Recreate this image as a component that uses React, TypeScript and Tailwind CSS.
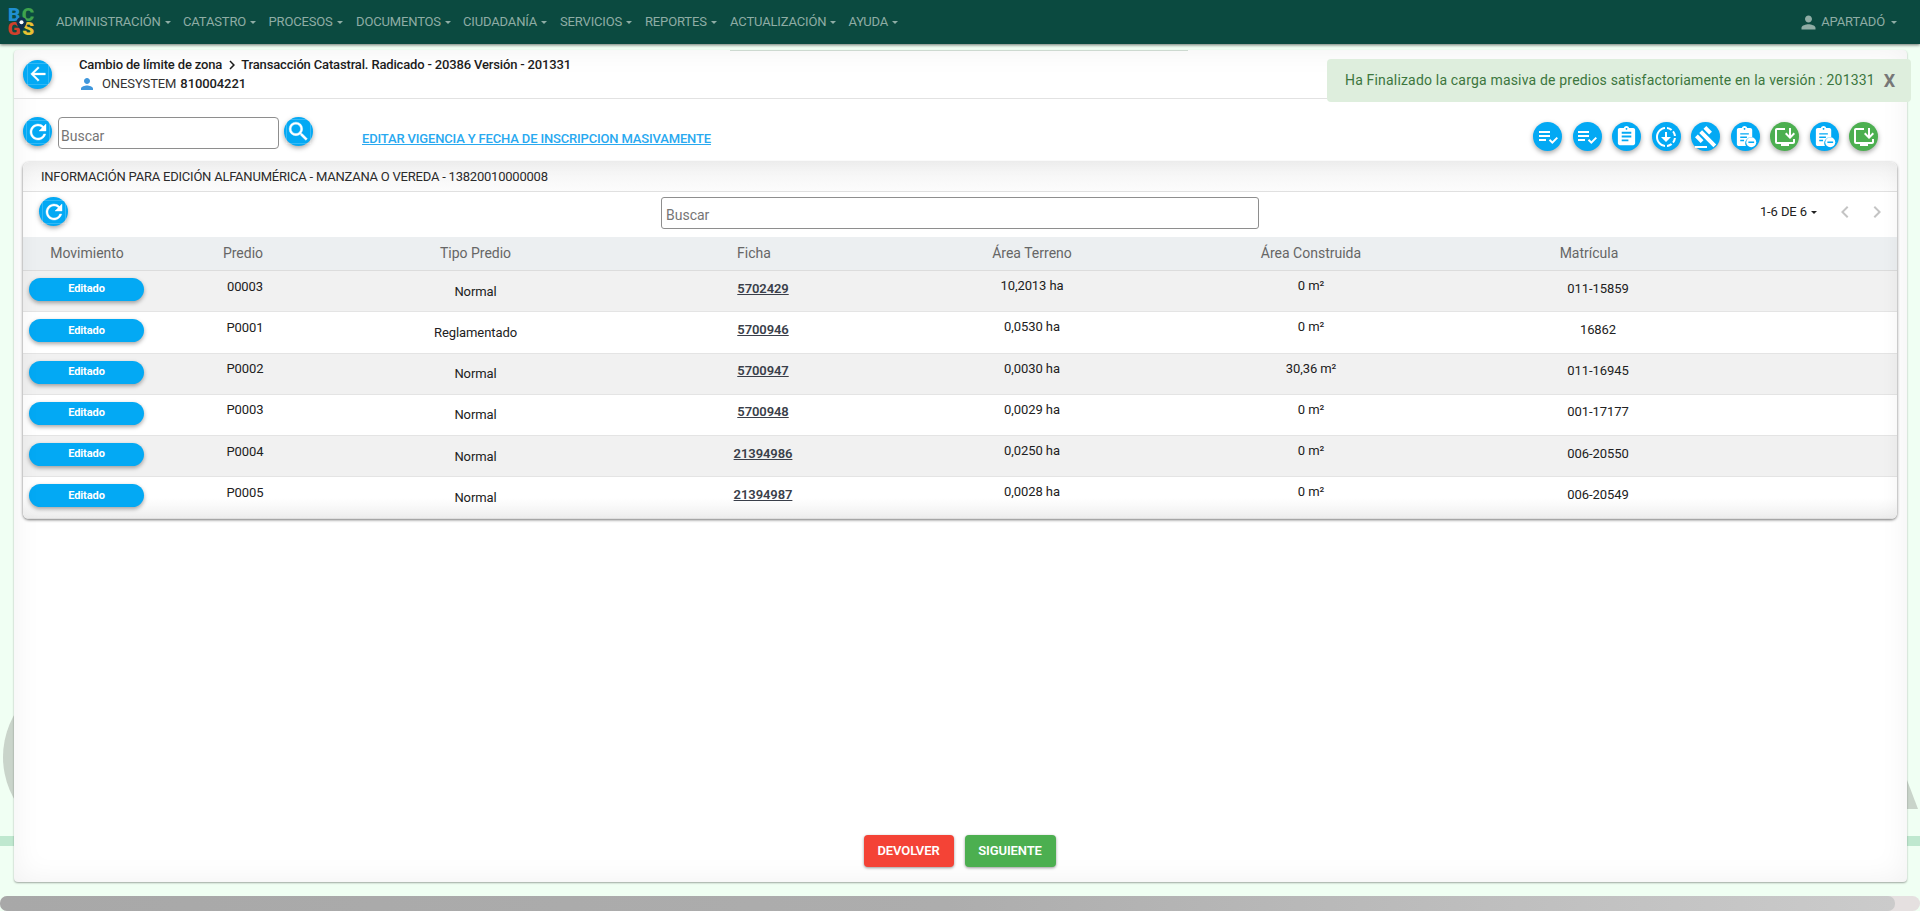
import React from "react";
import {
  MdArrowBack,
  MdAssignment,
  MdChevronLeft,
  MdChevronRight,
  MdDownloading,
  MdGavel,
  MdInstallDesktop,
  MdPerson,
  MdPlaylistAddCheck,
  MdRefresh,
  MdSearch,
} from "react-icons/md";

const NAV: [string, string][] = [
  ["ADMINISTRACIÓN", "w-[127px]"],
  ["CATASTRO", "w-[85.5px]"],
  ["PROCESOS", "w-[87.5px]"],
  ["DOCUMENTOS", "w-[107px]"],
  ["CIUDADANÍA", "w-[97px]"],
  ["SERVICIOS", "w-[85px]"],
  ["REPORTES", "w-[85px]"],
  ["ACTUALIZACIÓN", "w-[118.5px]"],
  ["AYUDA", "w-[60px]"],
];

const ROWS = [
  ["00003", "Normal", "5702429", "10,2013 ha", "0 m²", "011-15859"],
  ["P0001", "Reglamentado", "5700946", "0,0530 ha", "0 m²", "16862"],
  ["P0002", "Normal", "5700947", "0,0030 ha", "30,36 m²", "011-16945"],
  ["P0003", "Normal", "5700948", "0,0029 ha", "0 m²", "001-17177"],
  ["P0004", "Normal", "21394986", "0,0250 ha", "0 m²", "006-20550"],
  ["P0005", "Normal", "21394987", "0,0028 ha", "0 m²", "006-20549"],
];

const COLS = "grid grid-cols-[128px_184px_281px_276px_280px_278px_278px_1fr]";

function Caret({ className = "" }: { className?: string }) {
  return (
    <span
      className={`inline-block w-0 h-0 border-x-[3.5px] border-x-transparent border-t-[3.5px] border-t-current ${className}`}
    />
  );
}

function Round({
  children,
  green = false,
}: {
  children: React.ReactNode;
  green?: boolean;
}) {
  return (
    <button
      className={`w-[29px] h-[29px] shrink-0 rounded-full flex items-center justify-center text-white shadow-[0_2px_5px_rgba(0,0,0,0.35)] ${
        green ? "bg-[#4caf50]" : "bg-[#03a9f4]"
      }`}
    >
      {children}
    </button>
  );
}

function ClipMinus() {
  return (
    <svg width="23" height="23" viewBox="0 0 24 24" fill="white">
      <path d="M17 3h-3.200C13.400 1.800 12.300 1 11 1S8.600 1.800 8.200 3H5C3.900 3 3 3.900 3 5v15c0 1.100.9 2 2 2h7.500a6.500 6.500 0 0 1 6.500-9.500V5c0-1.100-.9-2-2-2zm-6 0c.55 0 1 .45 1 1s-.45 1-1 1-1-.45-1-1 .45-1 1-1zM6.500 8.500h9V10h-9V8.500zm0 3.500h7v1.500h-7V12zm0 3.500h4V17h-4v-1.500z" />
      <circle cx="18" cy="18" r="5.200" />
      <rect x="15" y="17.200" width="6" height="1.600" fill="#03a9f4" />
    </svg>
  );
}

function Logo() {
  return (
    <div className="relative w-[28px] h-[28px] grid grid-cols-2 grid-rows-2 text-[19px] leading-[14px] font-black text-center font-['Roboto',sans-serif]">
      <span className="text-[#1f8fd0]">B</span>
      <span className="text-[#3fa34d]">C</span>
      <span className="text-[#d0402c]">G</span>
      <span className="text-[#e8c232]">S</span>
      <svg
        className="absolute left-[9px] top-[9px]"
        width="11"
        height="14"
        viewBox="0 0 12 15"
      >
        <path d="M6 0a5.500 5.500 0 0 1 5.500 5.500C11.500 9 6 15 6 15S.5 9 .5 5.500A5.500 5.500 0 0 1 6 0z" fill="#10304f" />
        <circle cx="6" cy="5.500" r="2.200" fill="#fff" />
      </svg>
    </div>
  );
}

export default function App() {
  return (
    <div className="relative h-[911px] w-full overflow-hidden bg-[#f0fff3] flex flex-col font-['Roboto',sans-serif] text-[13px] text-[#212121]">
      {/* watermark behind the card */}
      <div className="absolute left-[3px] top-[672px] w-[170px] h-[170px] rounded-full bg-[#c9d4ca]" />
      <div className="absolute left-0 right-0 top-[836px] h-[10px] bg-[#bfe8cf]" />
      <svg
        className="absolute left-[1880px] top-[780px]"
        width="40"
        height="29"
        viewBox="0 0 40 29"
      >
        <polygon points="27,0 38,29 20,29" fill="#c9d4ca" />
      </svg>

      <nav className="relative z-10 h-[44px] shrink-0 bg-[#0b4a40] shadow-[0_1px_3px_rgba(0,0,0,0.55)] flex items-center pl-[7px] pr-[23px] text-[13px] tracking-[-0.15px] text-[#8fada5]">
        <div className="w-[49px] shrink-0">
          <Logo />
        </div>
        {NAV.map(([label, w]) => (
          <div key={label} className={`${w} shrink-0 flex items-center gap-[4px]`}>
            <span>{label}</span>
            <Caret />
          </div>
        ))}
        <div className="ml-auto flex items-center">
          <MdPerson size={21} className="mr-[2px]" />
          <span>APARTADÓ</span>
          <Caret className="ml-[6px]" />
        </div>
      </nav>

      <main className="relative z-[1] ml-[14px] mr-[13px] mt-[6px] h-[832px] shrink-0 rounded-[4px] bg-white flex flex-col shadow-[inset_0_0_30px_rgba(0,0,0,0.06),0_1px_2px_rgba(0,0,0,0.35)]">
        <header className="h-[49px] shrink-0 border-b border-[#e2e2e2] flex items-center pl-[9px]">
          <Round>
            <MdArrowBack size={22} className="stroke-[0.4]" />
          </Round>
          <div className="ml-[27px] mt-[1px]">
            <div className="h-[19px] flex items-center font-medium text-[#1c1c1c] tracking-[-0.16px]">
              <span>Cambio de límite de zona</span>
              <MdChevronRight size={18} className="mx-[0.5px]" />
              <span>Transacción Catastral. Radicado - 20386 Versión - 201331</span>
            </div>
            <div className="h-[19px] flex items-center tracking-[-0.1px]">
              <MdPerson size={18} className="text-[#3f97dc] ml-[-1px] mr-[6px]" />
              <span className="text-[#333]">ONESYSTEM</span>
              <span className="ml-[4px] font-medium">810004221</span>
            </div>
          </div>
        </header>

        <section className="h-[63px] shrink-0 flex items-start pt-[18px] pl-[9px] pr-[29px]">
          <Round>
            <MdRefresh size={24} className="stroke-[0.4]" />
          </Round>
          <div className="ml-[6px] w-[221px] h-[32px] border border-[#8e8e8e] rounded-[4px] flex items-center pl-[2px] pt-[7px] text-[14px] text-[#757575]">
            Buscar
          </div>
          <div className="ml-[5px]">
            <Round>
              <MdSearch size={25} className="stroke-[0.4]" />
            </Round>
          </div>
          <a className="ml-[49px] mt-[12px] font-medium underline text-[#29a9f0] tracking-[-0.16px]">
            EDITAR VIGENCIA Y FECHA DE INSCRIPCION MASIVAMENTE
          </a>
          <div className="ml-auto mt-[5px] flex gap-[10.500px]">
            <Round><MdPlaylistAddCheck size={24} /></Round>
            <Round><MdPlaylistAddCheck size={24} /></Round>
            <Round><MdAssignment size={23} /></Round>
            <Round><MdDownloading size={24} /></Round>
            <Round><MdGavel size={24} /></Round>
            <Round><ClipMinus /></Round>
            <Round green><MdInstallDesktop size={24} /></Round>
            <Round><ClipMinus /></Round>
            <Round green><MdInstallDesktop size={24} /></Round>
          </div>
        </section>

        <section className="relative ml-[9px] mr-[10px] h-[357px] shrink-0 rounded-[6px] bg-white flex flex-col overflow-hidden shadow-[0_1px_3px_rgba(0,0,0,0.55)]">
          <div className="h-[30px] shrink-0 border-b border-[#e0e0e0] bg-gradient-to-b from-[#f3f3f3] to-[#fcfcfc] flex items-center pl-[18px] text-[#2b2b2b] tracking-[-0.22px]">
            INFORMACIÓN PARA EDICIÓN ALFANUMÉRICA - MANZANA O VEREDA - 13820010000008
          </div>
          <div className="h-[45px] shrink-0 flex items-start pt-[5px] pl-[16px] pr-[8px]">
            <Round>
              <MdRefresh size={24} className="stroke-[0.4]" />
            </Round>
            <div className="ml-[593px] w-[598px] h-[32px] border border-[#8e8e8e] rounded-[3px] flex items-center pl-[4px] pt-[5px] text-[14px] text-[#757575]">
              Buscar
            </div>
            <div className="ml-auto mt-[5px] flex items-center h-[20px] text-[#212121] tracking-[-0.1px]">
              <span>1-6 DE 6</span>
              <Caret className="ml-[4px]" />
              <MdChevronLeft size={24} className="ml-[16px] text-[#c4c4c4]" />
              <MdChevronRight size={24} className="ml-[8px] text-[#c4c4c4]" />
            </div>
          </div>

          <div className={`${COLS} h-[34px] shrink-0 items-center bg-[#eceff1] border-b border-[#dcdcdc] text-[14px] text-[#666] text-center`}>
            <span>Movimiento</span>
            <span>Predio</span>
            <span>Tipo Predio</span>
            <span>Ficha</span>
            <span>Área Terreno</span>
            <span>Área Construida</span>
            <span>Matrícula</span>
          </div>

          {ROWS.map((r, i) => (
            <div
              key={r[0]}
              className={`${COLS} h-[41.300px] shrink-0 text-center border-b border-[#e4e4e4] tracking-[-0.08px] last:border-b-0 ${
                i === 5
                  ? "bg-gradient-to-b from-white via-white to-[#f2f2f2]"
                  : i % 2 === 0
                    ? "bg-[#f1f1f1]"
                    : "bg-white"
              }`}
            >
              <div className="pt-[7px] pl-[6px] text-left">
                <div className="w-[115px] h-[23px] rounded-full bg-[#03a9f4] text-white text-[11px] font-bold flex items-center justify-center shadow-[0_2px_4px_rgba(0,0,0,0.35)]">
                  Editado
                </div>
              </div>
              <div className="pt-[5.500px] pl-[4px]">{r[0]}</div>
              <div className="pt-[10.500px]">{r[1]}</div>
              <div className="pt-[7.500px] pl-[18px] font-semibold text-[#3a3f4a] underline">{r[2]}</div>
              <div className="pt-[5px]">{r[3]}</div>
              <div className="pt-[5px]">{r[4]}</div>
              <div className="pt-[7.500px] pl-[18px]">{r[5]}</div>
              <div />
            </div>
          ))}
          <div className="absolute inset-0 rounded-[6px] pointer-events-none shadow-[inset_0_0_18px_rgba(0,0,0,0.05)]" />
        </section>

        <footer className="mt-auto mb-[15px] pr-[2px] flex justify-center gap-[11px]">
          <button className="w-[90px] h-[32px] rounded-[4px] bg-[#f44336] text-white font-semibold tracking-[-0.1px] shadow-[0_1px_3px_rgba(0,0,0,0.4)]">
            DEVOLVER
          </button>
          <button className="w-[91px] h-[32px] rounded-[4px] bg-[#4caf50] text-white font-semibold tracking-[-0.1px] shadow-[0_1px_3px_rgba(0,0,0,0.4)]">
            SIGUIENTE
          </button>
        </footer>
      </main>

      {/* thin line on the card's upper edge */}
      <div className="absolute z-[2] left-[730px] top-[50px] w-[458px] h-[1px] bg-[#cdd9d0]" />

      {/* success toast */}
      <div className="absolute z-[3] left-[1327px] top-[59px] w-[584px] h-[43px] rounded-[4px] bg-[#deeedd] flex items-center pl-[18px] text-[14px] tracking-[0.18px] text-[#3c763d]">
        <span>Ha Finalizado la carga masiva de predios satisfactoriamente en la versión : 201331</span>
        <span className="ml-[9px] text-[18px] font-bold text-[#777]">X</span>
      </div>

      {/* horizontal scrollbar */}
      <div className="mt-[14px] h-[15px] shrink-0 rounded-[8px] bg-[#e5e0e0]">
        <div className="h-full w-[1895px] rounded-[7px] bg-gradient-to-r from-[#a8a8a8] via-[#adadad] to-[#cbcbcb]" />
      </div>
    </div>
  );
}
